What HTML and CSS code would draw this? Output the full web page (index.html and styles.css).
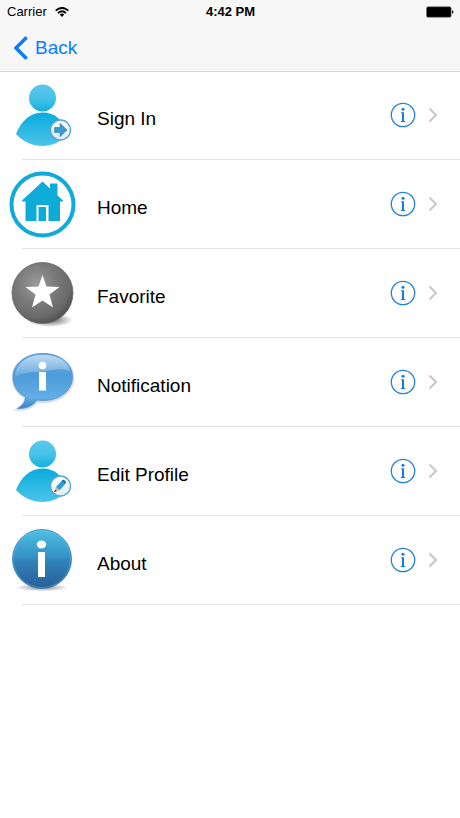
FILE: index.html
```html
<!DOCTYPE html>
<html lang="en">
<head>
<meta charset="utf-8">
<meta name="viewport" content="width=device-width, initial-scale=1">
<title>Menu</title>
<link rel="stylesheet" href="styles.css">
</head>
<body>
<svg class="defs" width="0" height="0" aria-hidden="true">
  <defs>
    <linearGradient id="head" x1="0" y1="0" x2="0" y2="1">
      <stop offset="0" stop-color="#5bc8ea"/><stop offset=".5" stop-color="#47c2e8"/><stop offset="1" stop-color="#14b0df"/>
    </linearGradient>
    <linearGradient id="torso" x1="0" y1="0" x2="0" y2="1">
      <stop offset="0" stop-color="#08acdd"/><stop offset="1" stop-color="#4cc4e9"/>
    </linearGradient>
    <linearGradient id="badge" x1="0" y1="0" x2="0" y2="1">
      <stop offset="0" stop-color="#ffffff"/><stop offset="1" stop-color="#dcecf7"/>
    </linearGradient>
    <radialGradient id="ball" cx=".4" cy=".35" r=".65">
      <stop offset="0" stop-color="#9a9a9a"/><stop offset=".5" stop-color="#7a7a7a"/><stop offset=".85" stop-color="#696969"/><stop offset="1" stop-color="#555555"/>
    </radialGradient>
    <radialGradient id="shade">
      <stop offset="0" stop-color="#000" stop-opacity=".65"/><stop offset=".6" stop-color="#000" stop-opacity=".25"/><stop offset="1" stop-color="#000" stop-opacity="0"/>
    </radialGradient>
    <linearGradient id="bubble" x1="0" y1="0" x2="0" y2="1">
      <stop offset="0" stop-color="#6aaee2"/><stop offset=".4" stop-color="#4d9bd9"/><stop offset=".8" stop-color="#62aee6"/><stop offset="1" stop-color="#3a7fc4"/>
    </linearGradient>
    <linearGradient id="gloss" x1="0" y1="0" x2="0" y2="1">
      <stop offset="0" stop-color="#fff" stop-opacity=".55"/><stop offset="1" stop-color="#fff" stop-opacity=".12"/>
    </linearGradient>
    <linearGradient id="disc" x1="0" y1="0" x2="0" y2="1">
      <stop offset="0" stop-color="#4fc0e2"/><stop offset=".45" stop-color="#3594c8"/><stop offset=".55" stop-color="#2f80b8"/><stop offset="1" stop-color="#285f98"/>
    </linearGradient>
    <symbol id="person" viewBox="0 0 84 88">
      <circle cx="42.500" cy="27" r="13.500" fill="url(#head)"/>
      <path d="M16 63C21 50 30 41.500 42.500 41.500S63 49 68 63C61 71 52 75 42.500 75S23 71 16 63Z" fill="url(#torso)"/>
      <circle cx="60.500" cy="59" r="10" fill="url(#badge)" stroke="#58a5cf" stroke-width="1.300"/>
    </symbol>
    <symbol id="info" viewBox="0 0 26 26">
      <circle cx="13" cy="13" r="11.700" fill="none" stroke="#2281dc" stroke-width="1.300"/>
      <circle cx="13" cy="7.300" r="1.500" fill="#1679e2"/>
      <path d="M11 10.300h3v8.700h1.200v.900h-4.400v-.900h1.200v-7.800h-1z" fill="#1679e2"/>
    </symbol>
    <symbol id="chevron" viewBox="0 0 10 16">
      <path d="M1.500 1.500 8 8l-6.500 6.500" fill="none" stroke="#c7c7cc" stroke-width="2"/>
    </symbol>
  </defs>
</svg>

<header class="top">
  <div class="status">
    <span class="carrier">Carrier
      <svg width="14" height="10" viewBox="0 0 14 10" aria-hidden="true">
        <path d="M.700 3.600Q7-1.800 13.300 3.600M3 6.100Q7 2.500 11 6.100" fill="none" stroke="#000" stroke-width="1.900"/>
        <path d="M4.700 7.600Q7 5.600 9.300 7.600L7 10Z" fill="#000"/>
      </svg>
    </span>
    <time class="clock">4:42 PM</time>
    <svg class="battery" width="28" height="12" viewBox="0 0 28 12" aria-hidden="true">
      <rect x=".500" y=".800" width="24.600" height="10.400" rx="1.500" fill="#000" stroke="#666" stroke-width=".600"/>
      <path d="M26 4.200q1.500.300 1.500 1.800T26 7.800z" fill="#222"/>
    </svg>
  </div>
  <nav class="bar">
    <a class="back" href="#">
      <svg width="14" height="24" viewBox="0 0 14 24" aria-hidden="true"><path d="M12.700 1.300 2 12l10.700 10.700" fill="none" stroke="#0a7cff" stroke-width="3.400"/></svg>
      Back
    </a>
  </nav>
</header>

<main>
  <ul class="menu">
    <li class="row">
      <a class="item" href="#">
        <svg class="picture" viewBox="0 0 84 88" aria-hidden="true">
          <use href="#person"/>
          <path d="M54.500 56.500h5.500v-4.200l7 6.700-7 6.700v-4.200h-5.500z" fill="#3f9ace" stroke="#287db2" stroke-width=".600"/>
        </svg>
        <span class="label">Sign In</span>
      </a>
      <button class="detail" type="button" aria-label="About Sign In"><svg width="26" height="26"><use href="#info"/></svg></button>
      <svg class="chevron" width="10" height="16" aria-hidden="true"><use href="#chevron"/></svg>
    </li>
    <li class="row">
      <a class="item" href="#">
        <svg class="picture" viewBox="0 0 84 88" aria-hidden="true">
          <circle cx="42.500" cy="44.500" r="31" fill="none" stroke="#0fabd8" stroke-width="4"/>
          <path d="M42.500 21.500 50 28.500V23.500h7.500v12L63 40.500v1H60V61H48.500V45H36.500V61H25.500V41.500H22v-1Z" fill="#0fabd8"/>
          <path d="M38.500 61V47h7.500V61Z" fill="#0fabd8"/>
        </svg>
        <span class="label">Home</span>
      </a>
      <button class="detail" type="button" aria-label="About Home"><svg width="26" height="26"><use href="#info"/></svg></button>
      <svg class="chevron" width="10" height="16" aria-hidden="true"><use href="#chevron"/></svg>
    </li>
    <li class="row">
      <a class="item" href="#">
        <svg class="picture" viewBox="0 0 84 88" aria-hidden="true">
          <ellipse cx="50" cy="71" rx="23" ry="7" fill="url(#shade)"/>
          <circle cx="42.500" cy="44" r="30.500" fill="url(#ball)" stroke="#666" stroke-width=".800"/>
          <path d="M42.500 26 46.500 37.500 59.500 38 49.500 45.500 53 58.500 42.500 51.500 32 58.500 35.500 45.500 25.500 38 38.500 37.500Z" fill="#fff"/>
        </svg>
        <span class="label">Favorite</span>
      </a>
      <button class="detail" type="button" aria-label="About Favorite"><svg width="26" height="26"><use href="#info"/></svg></button>
      <svg class="chevron" width="10" height="16" aria-hidden="true"><use href="#chevron"/></svg>
    </li>
    <li class="row">
      <a class="item" href="#">
        <svg class="picture" viewBox="0 0 84 88" aria-hidden="true">
          <path d="M43 16C60 16 73 26 73 39.500S60 64 43 64q-3.500 0-6-.500C32 70 25 72 17 71.500 22 68 25.500 64 25.500 59.500 17.500 56 13 48 13 39.500 13 26 26 16 43 16Z" fill="none" stroke="#b9c3ea" stroke-width="2.500" opacity=".6"/>
          <path d="M43 15.500C60 15.500 72.500 26 72.500 39S60 62.500 43 62.500q-3.500 0-6-.500C32 69 25 70.500 17.500 70.500 22 68 25.500 64 25.500 59 17.500 55 13 47.500 13 39 13 26 26 15.500 43 15.500Z" fill="url(#bubble)" stroke="#5090cc" stroke-width=".800"/>
          <path d="M43 17C59 17 69 24 70 33 61 29 49 33 39 34 29 34 21 35 15 39 15.500 25 27 17 43 17Z" fill="url(#gloss)"/>
          <circle cx="42.500" cy="27.500" r="3.800" fill="#fff"/><rect x="39" y="34" width="7" height="18.500" fill="#fff"/>
        </svg>
        <span class="label">Notification</span>
      </a>
      <button class="detail" type="button" aria-label="About Notification"><svg width="26" height="26"><use href="#info"/></svg></button>
      <svg class="chevron" width="10" height="16" aria-hidden="true"><use href="#chevron"/></svg>
    </li>
    <li class="row">
      <a class="item" href="#">
        <svg class="picture" viewBox="0 0 84 88" aria-hidden="true">
          <use href="#person"/>
          <path d="m56 60 5.500-6 3.500 3.200-5.500 6z" fill="#2f9bd8"/>
          <path d="m61.500 54 1-1q.800-.600 1.600 0l1.700 1.600q.600.800 0 1.500L65 57.200z" fill="#176ea8"/>
          <path d="m56 60 3.500 3.200-5 1.600z" fill="#e6ad68"/><path d="m55.100 62.800 1.500 1.400-2.400.900z" fill="#222"/>
        </svg>
        <span class="label">Edit Profile</span>
      </a>
      <button class="detail" type="button" aria-label="About Edit Profile"><svg width="26" height="26"><use href="#info"/></svg></button>
      <svg class="chevron" width="10" height="16" aria-hidden="true"><use href="#chevron"/></svg>
    </li>
    <li class="row">
      <a class="item" href="#">
        <svg class="picture" viewBox="0 0 84 88" aria-hidden="true">
          <ellipse cx="42" cy="71.500" rx="27" ry="4" fill="url(#shade)" opacity=".7"/>
          <circle cx="42" cy="43" r="29.500" fill="url(#disc)" stroke="#2f7fae" stroke-width=".800"/>
          <circle cx="42" cy="43" r="28.500" fill="none" stroke="#8cd0ec" stroke-width=".700" opacity=".4"/>
          <ellipse cx="41.500" cy="28.500" rx="4.700" ry="4" fill="#fff"/><rect x="38" y="36" width="7" height="25" fill="#fff"/>
        </svg>
        <span class="label">About</span>
      </a>
      <button class="detail" type="button" aria-label="More about this app"><svg width="26" height="26"><use href="#info"/></svg></button>
      <svg class="chevron" width="10" height="16" aria-hidden="true"><use href="#chevron"/></svg>
    </li>
  </ul>
</main>
</body>
</html>
```
FILE: styles.css
```css
* {
  box-sizing: border-box;
}

body {
  margin: 0;
  background: #fff;
  color: #000;
  font-family: "Liberation Sans", Arial, sans-serif;
}

svg {
  display: block;
  flex: none;
}

.defs {
  position: absolute;
}

.top {
  background: #f7f7f7;
  border-bottom: 1px solid #d5d7d7;
}

.status {
  display: grid;
  grid-template-columns: 1fr auto 1fr;
  align-items: center;
  height: 24px;
  padding: 0 6px 0 7px;
  font-size: 13px;
  line-height: 24px;
}

.carrier {
  display: flex;
  align-items: center;
  gap: 8px;
}

.clock {
  font-weight: bold;
}

.battery {
  justify-self: end;
}

.bar {
  display: flex;
  height: 47px;
  padding: 0 14px;
}

.back {
  display: flex;
  align-items: center;
  gap: 7px;
  color: #0a7cff;
  font-size: 19px;
  line-height: 24px;
  text-decoration: none;
}

.menu {
  margin: -1px 0 0;
  padding: 0;
  list-style: none;
}

.row {
  display: flex;
  align-items: center;
  height: 89px;
  padding: 0 22px 1px 0;
  background: linear-gradient(#e2e2e3, #e2e2e3) 22px 100% / 100% 1px no-repeat;
}

.item {
  display: flex;
  flex: 1;
  align-items: center;
  gap: 13px;
  color: inherit;
  text-decoration: none;
}

.picture {
  width: 84px;
  height: 88px;
}

.label {
  padding-top: 8px;
  font-size: 19px;
  line-height: 24px;
}

.detail {
  margin: 0 12px 0 0;
  padding: 0;
  border: 0;
  background: none;
}
```
